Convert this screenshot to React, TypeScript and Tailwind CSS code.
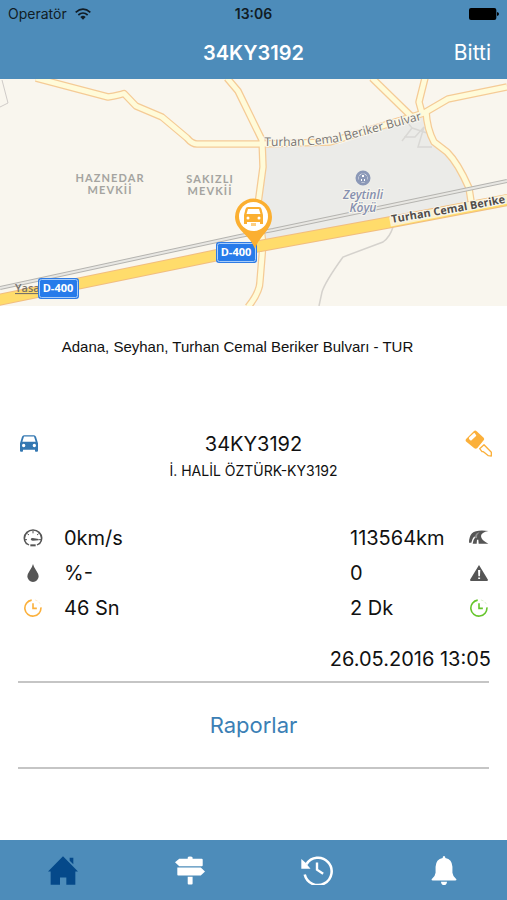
import type { ReactNode } from "react";

interface IconProps {
  className?: string;
}

interface StatProps {
  icon: ReactNode;
  label: string;
  value: string;
}

const WifiIcon = ({ className }: IconProps) => (
  <svg viewBox="0 0 48 36" className={className} fill="none" stroke="currentColor" strokeWidth="5" aria-hidden="true">
    <path d="M2 13Q24 -6 46 13" />
    <path d="M10 21Q24 9 38 21" />
    <path d="M16 27Q24 19 32 27L24 35Z" fill="currentColor" stroke="none" />
  </svg>
);

const BatteryIcon = ({ className }: IconProps) => (
  <svg viewBox="0 0 90 36" className={className} fill="currentColor" aria-hidden="true">
    <rect x="0" y="0" width="82" height="36" rx="6" />
    <path d="M84 12Q90 13 90 18T84 24Z" />
  </svg>
);

const CarIcon = ({ className }: IconProps) => (
  <svg viewBox="0 0 54 50" className={className} fill="currentColor" aria-hidden="true">
    <path
      fillRule="evenodd"
      d="M12 0H42Q46 0 48 5L54 24V47Q54 50 51 50H47Q45 50 45 47V44H9V47Q9 50 7 50H3Q0 50 0 47V24L6 5Q8 0 12 0ZM12 4L7 20H47L42 4ZM11 26A5 5 0 1 0 11 36A5 5 0 1 0 11 26ZM43 26A5 5 0 1 0 43 36A5 5 0 1 0 43 26Z"
    />
  </svg>
);

const KeyIcon = ({ className }: IconProps) => (
  <svg viewBox="0 0 84 84" className={className} aria-hidden="true">
    <path
      fill="currentColor"
      fillRule="evenodd"
      d="M27 3Q31 0 35 4L56 23Q59 27 56 31L37 54Q33 58 28 55L5 36Q-1 31 4 26ZM26 10L13 22Q10 25 14 29L18 32L34 17L31 12Q29 8 26 10Z"
    />
    <path d="M44 56L57 44L79 67V78L70 77L60 69L55 65L51 65Z" fill="none" stroke="currentColor" strokeWidth="4" strokeLinejoin="round" />
  </svg>
);

const GaugeIcon = ({ className }: IconProps) => (
  <svg viewBox="0 0 60 54" className={className} fill="none" stroke="currentColor" aria-hidden="true">
    <path d="M11 45A26 25 0 1 1 49 45" strokeWidth="5" />
    <path d="M30 6V13M13 14L18 18M47 14L42 18M5 32H12M48 32H55" strokeWidth="3" />
    <path d="M23 31Q24 27 29 27L47 30V34L29 35Q24 35 23 31Z" fill="currentColor" stroke="none" />
    <path d="M22 49H38" strokeWidth="6" />
    <path d="M10 43L18 48" strokeWidth="4" />
    <path d="M50 43L42 48" strokeWidth="4" />
  </svg>
);

const DropIcon = ({ className }: IconProps) => (
  <svg viewBox="0 0 36 54" className={className} fill="currentColor" aria-hidden="true">
    <path d="M18 0Q20 9 28 20Q35 30 35 37A17 17 0 0 1 1 37Q1 30 8 20Q16 9 18 0Z" />
  </svg>
);

const TimerIcon = ({ className }: IconProps) => (
  <svg viewBox="0 0 56 56" className={className} fill="none" stroke="currentColor" strokeWidth="5" aria-hidden="true">
    <path d="M24 3.500A25 25 0 1 0 52.500 26" />
    <path d="M28 13V29H40" />
    <path d="M34 3L42 6M46 9L51 16" strokeWidth="1.500" opacity="0.5" />
  </svg>
);

const RoadIcon = ({ className }: IconProps) => (
  <svg viewBox="0 0 60 48" className={className} fill="currentColor" aria-hidden="true">
    <path d="M58 3Q22 -2 9 10Q0 20 0 38H7Q9 27 16 19L18 23Q12 29 11 41H23L24 29H28L29 41H58Q36 30 36 18Q37 7 58 3Z" />
    <path d="M18 19Q20 9 32 6Q24 12 24 24H18Z" fill="#fff" opacity="0.35" />
  </svg>
);

const WarningIcon = ({ className }: IconProps) => (
  <svg viewBox="0 0 56 50" className={className} fill="currentColor" aria-hidden="true">
    <path fillRule="evenodd" d="M28 0L56 46Q56 50 53 50H3Q0 50 0 46ZM25 16L26 35H31L32 16ZM25.500 39V44H31.500V39Z" />
  </svg>
);

const HomeIcon = ({ className }: IconProps) => (
  <svg viewBox="0 0 90 86" className={className} fill="currentColor" aria-hidden="true">
    <path d="M45 0L90 46H82V86H55V64H36V86H8V46H0Z" />
    <path d="M65 5H76V24L65 14Z" />
  </svg>
);

const SignsIcon = ({ className }: IconProps) => (
  <svg viewBox="0 0 92 86" className={className} fill="currentColor" aria-hidden="true">
    <path d="M39 7V3Q39 0 46 0T54 3V7H82Q85 7 85 10V27Q85 30 82 30H13L0 18L13 7Z" />
    <path d="M7 34H79L92 46L79 58H10Q7 58 7 55Z" />
    <path d="M39 62H54V83Q54 86 51 86H42Q39 86 39 83Z" />
  </svg>
);

const HistoryIcon = ({ className }: IconProps) => (
  <svg viewBox="0 0 92 88" className={className} fill="none" stroke="currentColor" aria-hidden="true">
    <path d="M15 27A40 40 0 1 1 10 57" strokeWidth="7.500" />
    <path d="M0 12L11 21L27 40H0Z" fill="currentColor" stroke="none" />
    <path d="M46 22V43L64 55" strokeWidth="7" />
  </svg>
);

const BellIcon = ({ className }: IconProps) => (
  <svg viewBox="0 0 76 86" className={className} fill="currentColor" aria-hidden="true">
    <path d="M34 6Q34 0 38 0T42 6Q62 10 63 32V50Q64 61 74 68Q77 72 71 73H5Q-1 72 2 68Q12 61 13 50V32Q14 10 34 6Z" />
    <path d="M29 76H47Q46 86 38 86T29 76Z" />
  </svg>
);

const minorRoads = [
  "M36 -1L108 18Q120 16 124 14.500L136 27L162 38L187 59Q192 65 197 65H262L330 63L424 34L448 20L507 8",
  "M227 -1L238 12L262 61L263 88L258 125L263 165L260 202Q260 213 248 228",
  "M372 -1L412 38",
  "M425 -1L419 23L422 34",
  "M426 32Q427 50 434 63L447 73Q458 84 469 109L471 122",
];

const shields = [
  { x: 38, y: 199 },
  { x: 216, y: 163 },
];

const LocationMap = () => (
  <svg
    viewBox="0 0 507 227"
    preserveAspectRatio="xMidYMid slice"
    className="block h-[227px] w-full bg-[#f9f6ee] font-['Open_Sans',sans-serif]"
    role="img"
    aria-label="Turhan Cemal Beriker Bulvarı"
  >
    <path d="M266 69L340 65L425 36L434 64L448 74Q460 86 471 122L259 167Z" fill="#ebebe8" />
    <path d="M0 28L8 24L2 1" fill="none" stroke="#cfcbc8" />
    <path d="M402 62L412 49L427 54M404 58H415L424 48L418 68H432M412 49L408 44" fill="none" stroke="#d9d8d5" strokeWidth="1.500" />
    <path d="M393 148Q390 158 383 163L343 178Q325 203 322 213L319 227" fill="none" stroke="#d5d2cd" strokeWidth="1.500" />
    <g fill="none" strokeLinejoin="round">
      {minorRoads.map((d) => (
        <path key={d} d={d} stroke="#f5cb96" strokeWidth="7.500" />
      ))}
      {minorRoads.map((d) => (
        <path key={d} d={d} stroke="#fffbd9" strokeWidth="5" />
      ))}
      <path d="M0 209L240 157L273 151L507 102" stroke="#b5b4b0" strokeWidth="4" />
      <path d="M0 209L240 157L273 151L507 102" stroke="#e8e7e3" strokeWidth="2" />
      <path d="M-2 221L213 177L260 167L386 144L508 121" stroke="#f1bd80" strokeWidth="12" />
      <path d="M-2 221L213 177L260 167L386 144L508 121" stroke="#ffdc6b" strokeWidth="10" />
      <path d="M390 143L508 120" stroke="#fbf1cf" strokeWidth="9" />
    </g>

    <path id="boulevard" d="M264 67Q322 68 350 60L440 36" fill="none" />
    <path id="highway" d="M392 144L468 131L530 119" fill="none" />
    <g stroke="#f8f6ee" strokeWidth="2" paintOrder="stroke">
      <text fontSize="12" fontWeight="500" fill="#77736f">
        <textPath href="#boulevard">Turhan Cemal Beriker Bulvar</textPath>
      </text>
      <text fontSize="11" fontWeight="700" fill="#514d4a">
        <textPath href="#highway">Turhan Cemal Berike</textPath>
      </text>
      <g fontSize="11" fill="#a5a4a0" textAnchor="middle" className="font-[Lato,sans-serif] font-bold tracking-widest">
        <text x="110" y="103">HAZNEDAR</text>
        <text x="110" y="115">MEVKİİ</text>
        <text x="210" y="104">SAKIZLI</text>
        <text x="210" y="116">MEVKİİ</text>
      </g>
      <g fontSize="12" fontStyle="italic" fontWeight="600" fill="#8690b0" textAnchor="middle">
        <text x="363" y="120">Zeytinli</text>
        <text x="363" y="133">Köyü</text>
      </g>
    </g>
    <circle cx="363" cy="99" r="6" fill="#fff" stroke="#8b98b7" strokeWidth="3" />
    <path fillRule="evenodd" d="M359 97L363 94L367 97V103H359ZM362 96V98H364V96ZM361 100V102H362V100ZM364 100V102H365V100Z" fill="#8b98b7" />
    <text x="15" y="213" fontSize="11" fontWeight="600" fill="#77716a" textDecoration="underline">Yasa</text>

    {shields.map(({ x, y }) => (
      <g key={x}>
        <rect x={x} y={y} width="41" height="21" rx="3" fill="#2f7ce5" />
        <rect x={x + 1.5} y={y + 1.5} width="38" height="18" rx="2" fill="#277bea" stroke="#a9cdf8" />
        <text x={x + 20} y={y + 14} fontSize="11" fontWeight="700" fill="#fff" textAnchor="middle">
          D-400
        </text>
      </g>
    ))}

    <path d="M255 170C251 157 235 151 235 138A18.500 18.500 0 0 1 272 138C272 151 259 157 255 170Z" fill="#fbaf31" />
    <circle cx="253.500" cy="137.500" r="14.500" fill="#fff" />
    <g fill="#fbaf31">
      <path
        fillRule="evenodd"
        d="M248 128H259Q261 128 261.500 130L263 136V145H260V143H247V145H244V136L245.500 130Q246 128 248 128ZM248 130L246.500 135H260.500L259 130ZM248 137.500A1.500 1.500 0 1 0 248 140.500A1.500 1.500 0 1 0 248 137.500ZM259 137.500A1.500 1.500 0 1 0 259 140.500A1.500 1.500 0 1 0 259 137.500Z"
      />
      <path d="M251 144H256V147H251Z" opacity="0.6" />
    </g>
  </svg>
);

const Stat: React.FC<StatProps> = ({ icon, label, value }) => (
  <div className="flex h-[35px] items-center">
    <dt className="flex w-5 justify-center" aria-label={label}>
      {icon}
    </dt>
    <dd className="ml-[21px]">{value}</dd>
  </div>
);

const StatRight: React.FC<StatProps> = ({ icon, label, value }) => (
  <div className="flex h-[35px] items-center justify-between">
    <dt className="order-2 flex w-5 justify-center" aria-label={label}>
      {icon}
    </dt>
    <dd>{value}</dd>
  </div>
);

const App = () => (
  <div className="flex min-h-screen flex-col bg-white font-[Inter,sans-serif] text-[#111]">
    <header className="bg-[#4d8cba]">
      <div className="grid h-7 grid-cols-3 items-center px-2 text-sm text-[#111c25]">
        <span className="flex items-center gap-2">
          Operatör
          <WifiIcon className="h-3 w-4" />
        </span>
        <span className="text-center font-semibold">13:06</span>
        <BatteryIcon className="h-3 w-[30px] justify-self-end text-black" />
      </div>
      <div className="grid h-[51px] grid-cols-3 items-center px-4 pb-0.5 text-xl text-white">
        <h1 className="col-start-2 text-center font-semibold">34KY3192</h1>
        <button type="button" className="justify-self-end text-[21px]">
          Bitti
        </button>
      </div>
    </header>

    <LocationMap />

    <main className="flex flex-1 flex-col">
      <p className="pt-[30px] pr-8 text-center font-['Liberation_Sans',sans-serif] text-[15px] leading-[22px]">
        Adana, Seyhan, Turhan Cemal Beriker Bulvarı - TUR
      </p>

      <section className="mt-[72px] flex items-start justify-between pr-[14px] pl-5">
        <CarIcon className="mt-[5px] h-[17px] w-[18px] text-[#3478b2]" />
        <div className="pl-1 text-center">
          <h2 className="text-xl leading-7">34KY3192</h2>
          <p className="text-sm leading-[26px]">İ. HALİL ÖZTÜRK-KY3192</p>
        </div>
        <KeyIcon className="h-7 w-7 text-[#fbb03b]" />
      </section>

      <dl className="mt-9 flex justify-between pr-[18px] pl-[23px] text-xl">
        <div>
          <Stat label="Hız" value="0km/s" icon={<GaugeIcon className="h-[18px] w-5 text-[#555]" />} />
          <Stat label="Yakıt" value="%-" icon={<DropIcon className="h-[18px] w-3 text-[#555]" />} />
          <Stat label="Süre" value="46 Sn" icon={<TimerIcon className="h-[18px] w-[18px] text-[#fbb03b]" />} />
        </div>
        <div className="w-[139px]">
          <StatRight label="Mesafe" value="113564km" icon={<RoadIcon className="h-4 w-5 text-[#555]" />} />
          <StatRight label="Alarm" value="0" icon={<WarningIcon className="h-4 w-[18px] text-[#555]" />} />
          <StatRight label="Rölanti" value="2 Dk" icon={<TimerIcon className="h-[18px] w-[18px] text-[#65c52b]" />} />
        </div>
      </dl>

      <time dateTime="2016-05-26T13:05" className="mt-5 mr-4 self-end text-xl leading-7">
        26.05.2016 13:05
      </time>
      <button type="button" className="mx-[18px] mt-2 h-[88px] border-y-2 border-[#c5c5c5] text-[22px] text-[#3b7fb5]">
        Raporlar
      </button>
    </main>

    <nav className="grid h-[60px] grid-cols-4 items-center bg-[#4d8cba] text-white">
      <a href="#home" aria-label="Ana sayfa" className="flex justify-center text-[#05498a]">
        <HomeIcon className="h-[29px] w-[30px]" />
      </a>
      <a href="#routes" aria-label="Rotalar" className="flex justify-center">
        <SignsIcon className="h-[29px] w-[30px]" />
      </a>
      <a href="#history" aria-label="Geçmiş" className="flex justify-center">
        <HistoryIcon className="h-[30px] w-8" />
      </a>
      <a href="#alerts" aria-label="Bildirimler" className="flex justify-center">
        <BellIcon className="h-[29px] w-[26px]" />
      </a>
    </nav>
  </div>
);

export default App;
